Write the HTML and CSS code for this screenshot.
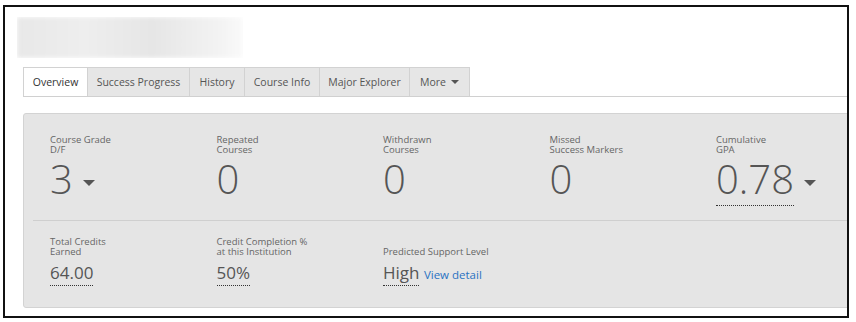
FILE: index.html
```html
<!DOCTYPE html>
<html>
<head>
<meta charset="utf-8">
<link rel="stylesheet" href="styles.css">
</head>
<body>
<div class="frame">
  <div class="blur-head"><div class="blur-inner"></div></div>
  <nav class="tabs">
    <div class="tab active">Overview</div>
    <div class="tab">Success Progress</div>
    <div class="tab">History</div>
    <div class="tab">Course Info</div>
    <div class="tab">Major Explorer</div>
    <div class="tab">More <span class="tri small"></span></div>
  </nav>
  <section class="panel">
    <div class="row top">
      <div class="stat">
        <div class="label">Course Grade<br>D/F</div>
        <div class="big">3 <span class="tri"></span></div>
      </div>
      <div class="stat">
        <div class="label">Repeated<br>Courses</div>
        <div class="big">0</div>
      </div>
      <div class="stat">
        <div class="label">Withdrawn<br>Courses</div>
        <div class="big">0</div>
      </div>
      <div class="stat">
        <div class="label">Missed<br>Success Markers</div>
        <div class="big">0</div>
      </div>
      <div class="stat">
        <div class="label">Cumulative<br>GPA</div>
        <div class="big"><span class="dotted">0.78</span> <span class="tri"></span></div>
      </div>
    </div>
    <div class="divider"></div>
    <div class="row bottom">
      <div class="stat">
        <div class="label">Total Credits<br>Earned</div>
        <div class="mid"><span class="dotted">64.00</span></div>
      </div>
      <div class="stat">
        <div class="label">Credit Completion %<br>at this Institution</div>
        <div class="mid"><span class="dotted">50%</span></div>
      </div>
      <div class="stat">
        <div class="label single">Predicted Support Level</div>
        <div class="mid"><span class="dotted">High</span> <a class="link">View detail</a></div>
      </div>
    </div>
  </section>
</div>
</body>
</html>
```
FILE: styles.css
```css
* { box-sizing: border-box; }
html, body { margin: 0; padding: 0; background: #fff; }
body {
  font-family: "Open Sans", "Liberation Sans", sans-serif;
  color: #555;
}
.frame {
  margin: 5px 0 0 3px;
  width: 846px;
  height: 313px;
  border: 2px solid #111;
  overflow: hidden;
  padding: 10px 0 0 18px;
}
.blur-head {
  margin-left: -6px;
  width: 226px;
  height: 41px;
  overflow: hidden;
}
.blur-inner {
  width: 100%;
  height: 100%;
  background: linear-gradient(90deg, #e8e8e8 0%, #eeeeee 30%, #e6e6e6 60%, #f3f3f3 90%, #fafafa 100%);
  filter: blur(2px);
}
.tabs {
  margin-top: 9px;
  display: flex;
  height: 30px;
  border-bottom: 1px solid #d0d0d0;
  width: 900px;
}
.tab {
  height: 29px;
  padding: 0;
  display: flex;
  align-items: center;
  justify-content: center;
  gap: 5px;
  font-size: 10.5px;
  white-space: nowrap;
  color: #555;
  background: #e6e6e6;
  border: 1px solid #d2d2d2;
  border-bottom: none;
  border-left: none;
}
.tab:first-child { border-left: 1px solid #d2d2d2; }
.tab.active { background: #fff; color: #333; }
.tab:nth-child(1) { width: 65px; }
.tab:nth-child(2) { width: 102px; }
.tab:nth-child(3) { width: 55px; }
.tab:nth-child(4) { width: 75px; }
.tab:nth-child(5) { width: 90px; }
.tab:nth-child(6) { width: 60px; }
.tri {
  display: inline-block;
  width: 0; height: 0;
  border-left: 6px solid transparent;
  border-right: 6px solid transparent;
  border-top: 6px solid #555;
  vertical-align: middle;
  margin-left: 0;
  position: relative;
  top: 0;
}
.tri.small {
  border-left-width: 4px;
  border-right-width: 4px;
  border-top-width: 4px;
  margin-left: 0;
  top: 0;
}
.panel {
  margin-top: 16px;
  width: 900px;
  height: 195px;
  background: #e5e5e5;
  border: 1px solid #d3d3d3;
  border-radius: 3px;
  padding-top: 21px;
}
.row {
  display: grid;
  grid-template-columns: repeat(5, 166.5px);
  padding-left: 26px;
}
.label {
  font-size: 9.5px;
  line-height: 10px;
  color: #666;
  height: 20px;
}
.label.single {
  display: flex;
  align-items: flex-end;
}
.big {
  margin-top: 1px;
  height: 50px;
  font-size: 40px;
  font-weight: 300;
  line-height: 46px;
  color: #555;
  white-space: nowrap;
}
.big .dotted {
  border-bottom: 1px dotted #333;
  display: inline-block;
  line-height: 46px;
  padding-bottom: 3px;
}
.divider {
  margin: 14px 0 0 9px;
  height: 1px;
  background: #cfcfcf;
}
.row.bottom { margin-top: 16px; }
.mid {
  margin-top: 5px;
  font-size: 17px;
  line-height: 22px;
  color: #555;
  white-space: nowrap;
}
.mid .dotted {
  border-bottom: 1px dotted #333;
  display: inline-block;
  line-height: 22px;
  padding-bottom: 1px;
}
.link {
  font-size: 11.5px;
  color: #2a72c2;
  margin-left: 0;
}
```
